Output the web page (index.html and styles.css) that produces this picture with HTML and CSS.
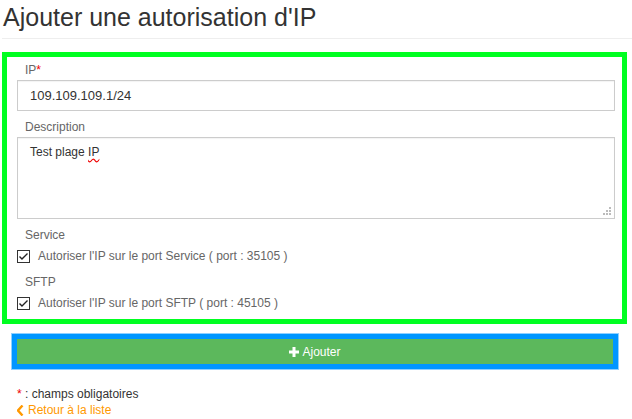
FILE: index.html
```html
<!DOCTYPE html>
<html lang="fr">
<head>
<meta charset="utf-8">
<title>Ajouter une autorisation d'IP</title>
<link rel="stylesheet" href="styles.css">
</head>
<body>
<div class="page">
  <h1 class="title">Ajouter une autorisation d'IP</h1>

  <form class="form-box">
    <div class="group">
      <label class="label">IP<span class="req">*</span></label>
      <div class="control">109.109.109.1/24</div>
    </div>
    <div class="group">
      <label class="label">Description</label>
      <div class="control area">Test plage <span class="misspelled">IP</span>
        <svg class="grip" width="8" height="8" viewBox="0 0 8 8"><rect x="6" y="0" width="2" height="2"/><rect x="3" y="3" width="2" height="2"/><rect x="6" y="3" width="2" height="2"/><rect x="0" y="6" width="2" height="2"/><rect x="3" y="6" width="2" height="2"/><rect x="6" y="6" width="2" height="2"/></svg>
      </div>
    </div>
    <div class="group">
      <label class="label">Service</label>
      <div class="check">
        <svg class="box" width="13" height="13" viewBox="0 0 13 13"><rect x="0.5" y="0.5" width="12" height="12" fill="#fff" stroke="#333"/><polyline points="2.5,6.5 5,9 10.5,3.5" fill="none" stroke="#222" stroke-width="1.4"/></svg>
        <span>Autoriser l'IP sur le port Service ( port : 35105 )</span>
      </div>
    </div>
    <div class="group last">
      <label class="label">SFTP</label>
      <div class="check">
        <svg class="box" width="13" height="13" viewBox="0 0 13 13"><rect x="0.5" y="0.5" width="12" height="12" fill="#fff" stroke="#333"/><polyline points="2.5,6.5 5,9 10.5,3.5" fill="none" stroke="#222" stroke-width="1.4"/></svg>
        <span>Autoriser l'IP sur le port SFTP ( port : 45105 )</span>
      </div>
    </div>
  </form>

  <div class="btn-wrap">
    <button class="btn" type="button">
      <svg class="plus" width="10" height="10" viewBox="0 0 10 10"><path d="M3.5 0h3v3.5H10v3H6.5V10h-3V6.5H0v-3h3.5z" fill="#fff"/></svg>
      <span>Ajouter</span>
    </button>
  </div>

  <p class="note"><span class="req">*</span> : champs obligatoires</p>
  <a class="back" href="#">
    <svg class="chev" width="7" height="11" viewBox="0 0 7 11"><path d="M5.5 0.5L1 5.5l4.5 5" fill="none" stroke="#f90" stroke-width="2.4"/></svg>
    <span>Retour à la liste</span>
  </a>
</div>
</body>
</html>
```

FILE: styles.css
```css
html, body {
  margin: 0;
  padding: 0;
  background: #fff;
}

body {
  font-family: "Liberation Sans", Arial, sans-serif;
  font-size: 12px;
  color: #333;
}

.page {
  padding-left: 2px;
}

.title {
  margin: 0;
  padding: 2px 0 6px 1px;
  font-size: 25px;
  line-height: 30px;
  font-weight: normal;
  color: #333;
  border-bottom: 1px solid #eee;
}

.form-box {
  display: flex;
  flex-direction: column;
  margin: 13px 0 0 0;
  width: 625px;
  box-sizing: border-box;
  border: 5px solid #00ff21;
  padding: 5px 7px 6px 10px;
}

.group {
  display: flex;
  flex-direction: column;
  margin-bottom: 8px;
}

.group.last {
  margin-bottom: 0;
}

.label {
  display: block;
  padding-left: 8px;
  line-height: 16px;
  margin-bottom: 2px;
  color: #666;
}

.req {
  color: #e00;
}

.control {
  position: relative;
  height: 31px;
  box-sizing: border-box;
  border: 1px solid #ccc;
  box-shadow: inset 0 1px 1px rgba(0, 0, 0, 0.05);
  padding: 0 12px;
  font-size: 13px;
  line-height: 29px;
  color: #333;
  background: #fff;
}

.control.area {
  height: 82px;
  font-size: 12px;
  line-height: 16px;
  padding-top: 6px;
}

.misspelled {
  text-decoration: underline wavy #e00;
  text-decoration-skip-ink: none;
  text-underline-offset: 2px;
}

.grip {
  position: absolute;
  right: 3px;
  bottom: 3px;
  fill: #bbb;
}

.check {
  display: flex;
  align-items: center;
  gap: 8px;
  height: 20px;
  margin-top: 1px;
  color: #666;
}

.box {
  flex: none;
}

.btn-wrap {
  margin: 10px 0 0 10px;
  width: 606px;
  box-sizing: border-box;
  border: 4px solid #0096ff;
  box-shadow: 0 0 0 1px #8fd0ff;
  padding: 1px;
  background: #0096ff;
}

.btn {
  display: flex;
  align-items: center;
  justify-content: center;
  gap: 2px;
  width: 100%;
  height: 25px;
  border: 0;
  margin: 0;
  padding: 0;
  background: #5cb85c;
  color: #fff;
  font-family: "Liberation Sans", Arial, sans-serif;
  font-size: 12px;
}

.plus {
  margin-right: 1px;
}

.note {
  margin: 17px 0 0 15px;
  line-height: 16px;
  font-size: 12px;
  color: #333;
}

.back {
  display: flex;
  align-items: center;
  gap: 4px;
  margin-left: 15px;
  line-height: 16px;
  color: #f90;
  text-decoration: none;
}
```
